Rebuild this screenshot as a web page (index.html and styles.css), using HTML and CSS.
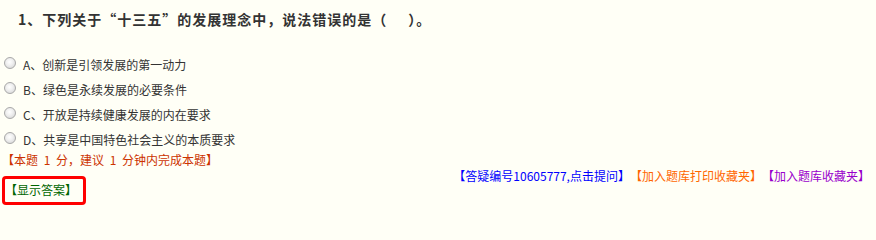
FILE: index.html
```html
<!DOCTYPE html>
<html lang="zh-CN">
<head>
<meta charset="utf-8">
<title>题目</title>
<link rel="stylesheet" href="styles.css">
</head>
<body>
<div class="question">
  <div class="title">1、下列关于“十三五”的发展理念中，说法错误的是（&nbsp;&nbsp;&nbsp;&nbsp;&nbsp;）。</div>
  <ul class="options">
    <li class="option"><span class="radio"></span><span class="opt-text">A、创新是引领发展的第一动力</span></li>
    <li class="option"><span class="radio"></span><span class="opt-text">B、绿色是永续发展的必要条件</span></li>
    <li class="option"><span class="radio"></span><span class="opt-text">C、开放是持续健康发展的内在要求</span></li>
    <li class="option"><span class="radio"></span><span class="opt-text">D、共享是中国特色社会主义的本质要求</span></li>
  </ul>
  <div class="score">【本题 1 分，建议 1 分钟内完成本题】</div>
  <div class="links">
    <a class="link link-blue">【答疑编号10605777,点击提问】</a><a class="link link-orange">【加入题库打印收藏夹】</a><a class="link link-purple">【加入题库收藏夹】</a>
  </div>
  <div class="answer-wrap"><span class="answer">【显示答案】</span></div>
</div>
</body>
</html>
```

FILE: styles.css
```css
html, body {
  margin: 0;
  padding: 0;
}
body {
  background: #fffff6;
  font-family: "Noto Sans CJK SC", "Liberation Sans", sans-serif;
  color: #333333;
  width: 876px;
  height: 208px;
  overflow: hidden;
}
.question {
  display: flex;
  flex-direction: column;
}
.title {
  margin-top: 9px;
  padding-left: 18px;
  font-size: 14px;
  font-weight: bold;
  letter-spacing: 1px;
  line-height: 20px;
  color: #333333;
}
.options {
  list-style: none;
  margin: 23px 0 0 0;
  padding: 0;
}
.option {
  display: flex;
  align-items: flex-start;
  height: 25px;
}
.radio {
  box-sizing: border-box;
  width: 12px;
  height: 12px;
  margin: 5px 7px 0 4px;
  border-radius: 50%;
  border: 1px solid #a8a8a8;
  background: radial-gradient(circle at 45% 40%, #ffffff 0%, #f0f0f0 40%, #d0d0d0 100%);
}
.opt-text {
  font-size: 12px;
  line-height: 25px;
  color: #333333;
}
.score {
  padding-left: 2px;
  font-size: 12px;
  line-height: 16px;
  word-spacing: 3px;
  color: #cc3300;
}
.links {
  display: flex;
  justify-content: flex-end;
  padding-right: 6px;
  font-size: 12px;
  line-height: 15px;
}
.link {
  cursor: pointer;
}
.link-blue {
  color: #0000ff;
}
.link-orange {
  color: #ff6600;
}
.link-purple {
  color: #9900cc;
}
.answer-wrap {
  display: flex;
  margin-top: -7px;
  padding-left: 2px;
}
.answer {
  box-sizing: border-box;
  width: 84px;
  height: 29px;
  border: 3px solid #ff0000;
  border-radius: 4px;
  padding-left: 0;
  padding-top: 3px;
  font-size: 12px;
  line-height: 16px;
  color: #006600;
}
```
